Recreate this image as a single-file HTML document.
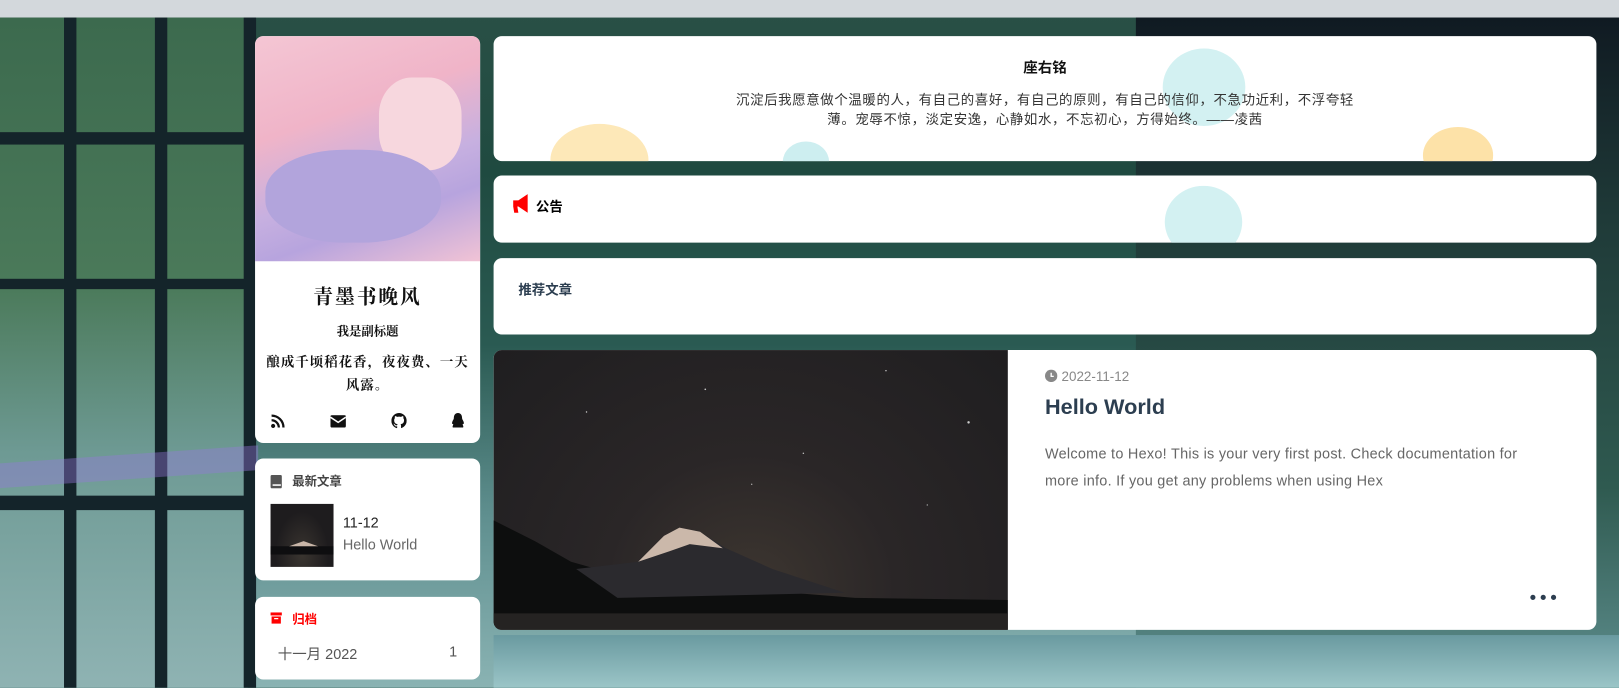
<!DOCTYPE html>
<html><head><meta charset="utf-8"><style>
*{margin:0;padding:0;box-sizing:border-box}
html,body{width:1619px;height:687px;overflow:hidden}
body{font-family:"Liberation Sans","Noto Sans CJK SC",sans-serif;background:#2f5a50}
#w{position:absolute;left:0;top:0;width:1568px;height:666px;transform:scale(1.0326);transform-origin:0 0;overflow:hidden;
background:linear-gradient(180deg,#2a5046 0%,#1f4a40 25%,#2a5a52 50%,#5f8f8f 75%,#8ab3b3 100%);}
.top{position:absolute;left:0;top:0;width:1568px;height:17px;background:#d3d8dc}
.bgl{position:absolute;left:0;top:17px;width:240px;height:650px;background:linear-gradient(180deg,#3c6a4e,#4b7a5a 40%,#6e9a94 65%,#8fb3b3)}
.bar{position:absolute;background:#14242a}
.card{position:absolute;background:#fff;border-radius:8px;overflow:hidden}
.cloud{position:absolute;border-radius:50%}
</style></head><body><div id="w">
<div class="top"></div>
<div class="bgl"></div>
<div class="bar" style="left:62px;top:17px;width:12px;height:650px"></div>
<div class="bar" style="left:150px;top:17px;width:12px;height:650px"></div>
<div class="bar" style="left:236px;top:17px;width:12px;height:650px"></div>
<div class="bar" style="left:0;top:128px;width:248px;height:12px"></div>
<div class="bar" style="left:0;top:270px;width:248px;height:10px"></div>
<div class="bar" style="left:0;top:480px;width:248px;height:14px"></div>
<div style="position:absolute;left:0;top:440px;width:250px;height:24px;background:rgba(150,120,220,.4);transform:skewY(-4deg)"></div>
<div style="position:absolute;left:1100px;top:17px;width:470px;height:650px;background:linear-gradient(180deg,#101a22,#1f3a38 30%,#2f5a50 70%,#5f8f8f)"></div>
<div style="position:absolute;left:478px;top:615px;width:1090px;height:52px;background:linear-gradient(180deg,#6a9aa0,#9cc6c8)"></div>

<div class="card" style="left:247px;top:35px;width:218px;height:394px">
 <div style="height:218px;background:linear-gradient(160deg,#f4c6d4 0%,#f0b4c8 35%,#c7b0e0 60%,#b7a4de 75%,#f1c3d5 100%)">
  <div style="position:absolute;left:120px;top:40px;width:80px;height:90px;border-radius:40%;background:#f7d7de"></div>
  <div style="position:absolute;left:10px;top:110px;width:170px;height:90px;border-radius:45%;background:#b2a4dc"></div>
 </div>
 <div style="text-align:center;font-family:'Noto Serif CJK SC',serif;color:#111">
  <div style="font-size:19px;font-weight:bold;margin-top:20px;letter-spacing:2px">青墨书晚风</div>
  <div style="font-size:12px;font-weight:bold;margin-top:12px">我是副标题</div>
  <div style="font-size:13px;font-weight:bold;margin-top:10px;line-height:22px;padding:0 6px;letter-spacing:1px">酿成千顷稻花香，夜夜费、一天风露。</div>
 </div>
 <svg style="position:absolute;left:15px;top:366px" width="14" height="14" viewBox="0 0 14 14"><circle cx="2.5" cy="11.5" r="2" fill="#111"/><path d="M1 6a7 7 0 0 1 7 7M1 1.5a11.5 11.5 0 0 1 11.5 11.5" stroke="#111" stroke-width="2.2" fill="none"/></svg>
 <svg style="position:absolute;left:73px;top:367px" width="15" height="12" viewBox="0 0 15 12"><rect width="15" height="12" rx="1.5" fill="#111"/><path d="M0 2l7.5 5L15 2" stroke="#fff" stroke-width="1.5" fill="none"/></svg>
 <svg style="position:absolute;left:132px;top:365px" width="15" height="15" viewBox="0 0 16 16"><path fill="#111" d="M8 0a8 8 0 0 0-2.5 15.6c.4 0 .5-.2.5-.4v-1.5c-2.2.5-2.7-1-2.7-1-.4-.9-.9-1.2-.9-1.2-.7-.5.1-.5.1-.5.8.1 1.2.8 1.2.8.7 1.3 1.9.9 2.3.7.1-.5.3-.9.5-1.1-1.8-.2-3.6-.9-3.6-4 0-.9.3-1.6.8-2.1-.1-.2-.4-1 .1-2.1 0 0 .7-.2 2.2.8a7.5 7.5 0 0 1 4 0c1.5-1 2.2-.8 2.2-.8.4 1.1.2 1.9.1 2.1.5.6.8 1.3.8 2.1 0 3.1-1.9 3.8-3.6 4 .3.3.5.8.5 1.5v2.2c0 .2.1.5.6.4A8 8 0 0 0 8 0z"/></svg>
 <svg style="position:absolute;left:190px;top:365px" width="13" height="15" viewBox="0 0 13 15"><path fill="#111" d="M6.5 0C3.5 0 2.5 2.5 2.5 5c0 1-1 2-1.5 3.5-.5 1.5 0 2.5.5 2L2 11c-.5 1.5-1 2-.5 3h10c.5-1 0-1.5-.5-3l.5-.5c.5.5 1-.5.5-2S10.5 6 10.5 5c0-2.5-1-5-4-5z"/></svg>
</div>

<div class="card" style="left:247px;top:444px;width:218px;height:118px">
 <svg style="position:absolute;left:15px;top:16px" width="11" height="13" viewBox="0 0 11 13"><rect width="11" height="13" rx="1.5" fill="#555"/><rect x="2" y="9" width="8" height="1.5" fill="#fff"/></svg>
 <div style="position:absolute;left:36px;top:13px;font-size:12px;font-weight:bold;color:#444">最新文章</div>
 <div style="position:absolute;left:15px;top:44px;width:61px;height:61px;background:radial-gradient(ellipse at 50% 80%,#3a3530,#1e1c1e 60%);">
  <div style="position:absolute;left:0;bottom:12px;width:61px;height:8px;background:#0e0e10"></div>
  <div style="position:absolute;left:18px;bottom:20px;width:0;height:0;border-left:14px solid transparent;border-right:14px solid transparent;border-bottom:5px solid #c9b6a8"></div>
 </div>
 <div style="position:absolute;left:85px;top:54px;font-size:14px;color:#222">11-12</div>
 <div style="position:absolute;left:85px;top:75px;font-size:14px;color:#666">Hello World</div>
</div>

<div class="card" style="left:247px;top:578px;width:218px;height:80px">
 <svg style="position:absolute;left:15px;top:15px" width="11" height="11" viewBox="0 0 11 11"><rect width="11" height="3" fill="red"/><rect x="1" y="4" width="9" height="7" fill="red"/><rect x="3.5" y="5.5" width="4" height="1.2" fill="#fff"/></svg>
 <div style="position:absolute;left:36px;top:13px;font-size:12px;font-weight:bold;color:red">归档</div>
 <div style="position:absolute;left:22px;top:45px;font-size:14px;color:#555">十一月 2022</div>
 <div style="position:absolute;left:188px;top:45px;font-size:14px;color:#555">1</div>
</div>

<div class="card" style="left:478px;top:35px;width:1068px;height:121px">
 <div class="cloud" style="left:55px;top:85px;width:95px;height:70px;background:#fde8b8"></div>
 <div class="cloud" style="left:280px;top:102px;width:45px;height:40px;background:#cdeef0"></div>
 <div class="cloud" style="left:648px;top:12px;width:80px;height:75px;background:#d3f1f2"></div>
 <div class="cloud" style="left:900px;top:88px;width:68px;height:55px;background:#fde2a8"></div>
 <div style="position:absolute;left:0;width:1068px;top:20px;text-align:center;font-size:14px;font-weight:bold;color:#111">座右铭</div>
 <div style="position:absolute;left:228px;width:612px;top:52px;text-align:center;font-size:13px;line-height:19px;color:#333;letter-spacing:0.6px">沉淀后我愿意做个温暖的人，有自己的喜好，有自己的原则，有自己的信仰，不急功近利，不浮夸轻薄。宠辱不惊，淡定安逸，心静如水，不忘初心，方得始终。——凌茜</div>
</div>

<div class="card" style="left:478px;top:170px;width:1068px;height:65px">
 <div class="cloud" style="left:650px;top:10px;width:75px;height:70px;background:#d3f1f2"></div>
 <svg style="position:absolute;left:17px;top:17px" width="21" height="21" viewBox="0 0 21 21"><path fill="red" d="M2 7h5l9-6v18l-9-6H6l1 6H3l-1-6z"/></svg>
 <div style="position:absolute;left:41px;top:20px;font-size:13px;font-weight:bold;color:#000">公告</div>
</div>

<div class="card" style="left:478px;top:250px;width:1068px;height:74px">
 <div style="position:absolute;left:24px;top:20px;font-size:13px;font-weight:bold;color:#2c3e50">推荐文章</div>
</div>

<div class="card" style="left:478px;top:339px;width:1068px;height:271px">
 <div style="position:absolute;left:0;top:0;width:498px;height:271px;background:radial-gradient(ellipse at 50% 85%,#3d3630 0%,#2a2627 40%,#1f1e20 100%)">
  <svg width="498" height="271" style="position:absolute;left:0;top:0">
   <path d="M0 165 L40 185 L75 205 L110 215 L150 208 L200 200 L250 232 L350 240 L498 242 L498 271 L0 271Z" fill="#0d0e0e"/>
   <path d="M80 212 L140 205 L165 180 L180 172 L200 176 L225 192 L270 212 L340 235 L120 240Z" fill="#2b2a2e"/>
   <path d="M140 205 L165 180 L180 172 L200 176 L222 192 L190 188 L170 195Z" fill="#cbb8aa"/>
   <rect x="0" y="255" width="498" height="16" fill="#252322"/>
   <g fill="#ccc"><circle cx="460" cy="70" r="1.2"/><circle cx="205" cy="38" r="0.8"/><circle cx="300" cy="100" r="0.7"/><circle cx="90" cy="60" r="0.7"/><circle cx="380" cy="20" r="0.7"/><circle cx="250" cy="130" r="0.6"/><circle cx="420" cy="150" r="0.6"/></g>
  </svg>
 </div>
 <svg style="position:absolute;left:534px;top:19px" width="12" height="12" viewBox="0 0 12 12"><circle cx="6" cy="6" r="6" fill="#888"/><path d="M6 3v3.5h2.5" stroke="#fff" stroke-width="1.3" fill="none"/></svg>
 <div style="position:absolute;left:550px;top:18px;font-size:13px;color:#888">2022-11-12</div>
 <div style="position:absolute;left:534px;top:44px;font-size:21px;font-weight:bold;color:#2c3e50">Hello World</div>
 <div style="position:absolute;left:534px;top:87px;width:492px;font-size:14px;line-height:26px;color:#666;letter-spacing:0.25px">Welcome to Hexo! This is your very first post. Check documentation for more info. If you get any problems when using Hex</div>
 <div style="position:absolute;left:1004px;top:237px;width:5px;height:5px;border-radius:50%;background:#2c3e50;box-shadow:10px 0 #2c3e50,20px 0 #2c3e50"></div>
</div>
</div></body></html>
